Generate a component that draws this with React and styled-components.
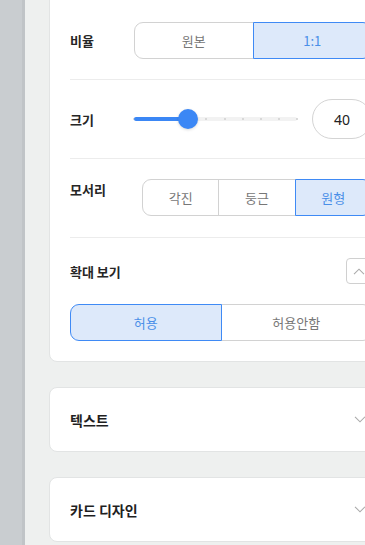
import React from 'react';
import styled, { createGlobalStyle } from 'styled-components';

const Global = createGlobalStyle`
  html, body { margin: 0; padding: 0; overflow: hidden; }
  body {
    font-family: "Noto Sans CJK KR", "Noto Sans", sans-serif;
    background: #eef0ef;
  }
`;

const Shell = styled.div`
  display: flex;
  width: 420px;
  height: 545px;
`;

const Side = styled.div`
  width: 22px;
  flex-shrink: 0;
  background: #c9cdd0;
  border-right: 3px solid #c0c4c7;
`;

const Main = styled.div`
  flex: 1;
  padding: 0 24px;
  display: flex;
  flex-direction: column;
  gap: 25px;
  margin-top: -10px;
`;

const Card = styled.section`
  width: 344px;
  box-sizing: border-box;
  background: #fff;
  border: 1px solid #e2e4e4;
  border-radius: 8px;
  padding: ${p => (p.$open ? '10px 20px 20px' : '0 20px')};
`;

const Row = styled.div`
  display: flex;
  align-items: ${p => p.$align || 'center'};
  height: 38px;
  padding: 20px 0;
  border-bottom: 1px solid #ececec;
`;

const Label = styled.div`
  width: ${p => p.$w || 64}px;
  flex-shrink: 0;
  font-size: 13px;
  font-weight: 600;
  color: #262626;
  padding-top: ${p => p.$pt || 0}px;
`;

const Segmented = styled.div`
  flex: 1;
  display: flex;
`;

const Seg = styled.button`
  flex: 1;
  height: 37px;
  margin-left: -1px;
  font-family: inherit;
  font-size: 13px;
  color: ${p => (p.$on ? '#4a8fe8' : '#777')};
  background: ${p => (p.$on ? '#dde9fa' : '#fff')};
  border: 1px solid ${p => (p.$on ? '#3f8af5' : '#d2d2d2')};
  position: relative;
  z-index: ${p => (p.$on ? 1 : 0)};
  padding: 0;
  &:first-child { margin-left: 0; border-radius: 9px 0 0 9px; }
  &:last-child { border-radius: 0 9px 9px 0; }
`;

const SliderWrap = styled.div`
  flex: 1;
  height: 20px;
  position: relative;
  margin-right: 15px;
  display: flex;
  align-items: center;
`;

const Track = styled.div`
  width: 100%;
  height: 4px;
  border-radius: 2px;
  background: #f2f2f2;
  position: relative;
`;

const Fill = styled.div`
  position: absolute;
  left: 0;
  top: 0;
  height: 4px;
  border-radius: 2px;
  background: #3b87f5;
`;

const Dot = styled.span`
  position: absolute;
  top: 1px;
  width: 2px;
  height: 2px;
  margin-left: -1px;
  border-radius: 1px;
  background: #cfcfcf;
`;

const Thumb = styled.span`
  position: absolute;
  top: 50%;
  width: 20px;
  height: 20px;
  margin: -10px 0 0 -10px;
  border-radius: 50%;
  background: #3b87f5;
  box-shadow: 0 1px 3px rgba(0, 0, 0, 0.15);
`;

const NumBox = styled.div`
  width: 60px;
  height: 40px;
  flex-shrink: 0;
  box-sizing: border-box;
  border: 1px solid #d4d4d4;
  border-radius: 20px;
  display: flex;
  align-items: center;
  justify-content: center;
  font-size: 14px;
  color: #222;
  font-family: "Noto Sans", sans-serif;
`;

const Head = styled.div`
  display: flex;
  align-items: center;
  justify-content: space-between;
  padding-top: 20px;
`;

const IconBtn = styled.button`
  width: 26px;
  height: 26px;
  padding: 0;
  border: 1px solid #d0d0d0;
  border-radius: 4px;
  background: #fff;
  display: flex;
  align-items: center;
  justify-content: center;
`;

const Toggle = styled.div`
  display: flex;
  margin-top: 20px;
`;

const FoldHead = styled.div`
  height: 63px;
  display: flex;
  align-items: center;
  justify-content: space-between;
  font-size: 14px;
  font-weight: 700;
  color: #1f1f1f;
`;

const Chev = ({ up, color = '#aaa' }) => (
  <svg width="12" height="7" viewBox="0 0 12 7" fill="none">
    <path d={up ? 'M1 6.2L6 1.2L11 6.2' : 'M1 0.8L6 5.8L11 0.8'} stroke={color} strokeWidth="1.1" />
  </svg>
);

const ChevSlot = styled.span`
  display: flex;
  margin-right: 6px;
`;

const Slider = ({ value, steps }) => {
  const pct = (value / steps) * 100;
  return (
    <SliderWrap>
      <Track>
        {Array.from({ length: steps + 1 }, (_, i) => (
          <Dot key={i} style={{ left: `${(i / steps) * 100}%` }} />
        ))}
        <Fill style={{ width: `${pct}%` }} />
      </Track>
      <Thumb style={{ left: `${pct}%` }} />
    </SliderWrap>
  );
};

export default function App() {
  return (
    <>
      <Global />
      <Shell>
        <Side />
        <Main>
          <Card $open>
            <Row>
              <Label>비율</Label>
              <Segmented>
                <Seg>원본</Seg>
                <Seg $on>1:1</Seg>
              </Segmented>
            </Row>
            <Row>
              <Label>크기</Label>
              <Slider value={3} steps={9} />
              <NumBox>40</NumBox>
            </Row>
            <Row $align="flex-start">
              <Label $w={72} $pt={1}>모서리</Label>
              <Segmented>
                <Seg>각진</Seg>
                <Seg>둥근</Seg>
                <Seg $on>원형</Seg>
              </Segmented>
            </Row>
            <Head>
              <Label>확대 보기</Label>
              <IconBtn>
                <Chev up />
              </IconBtn>
            </Head>
            <Toggle>
              <Seg $on>허용</Seg>
              <Seg>허용안함</Seg>
            </Toggle>
          </Card>
          <Card>
            <FoldHead>
              텍스트
              <ChevSlot><Chev /></ChevSlot>
            </FoldHead>
          </Card>
          <Card>
            <FoldHead>
              카드 디자인
              <ChevSlot><Chev /></ChevSlot>
            </FoldHead>
          </Card>
        </Main>
      </Shell>
    </>
  );
}
